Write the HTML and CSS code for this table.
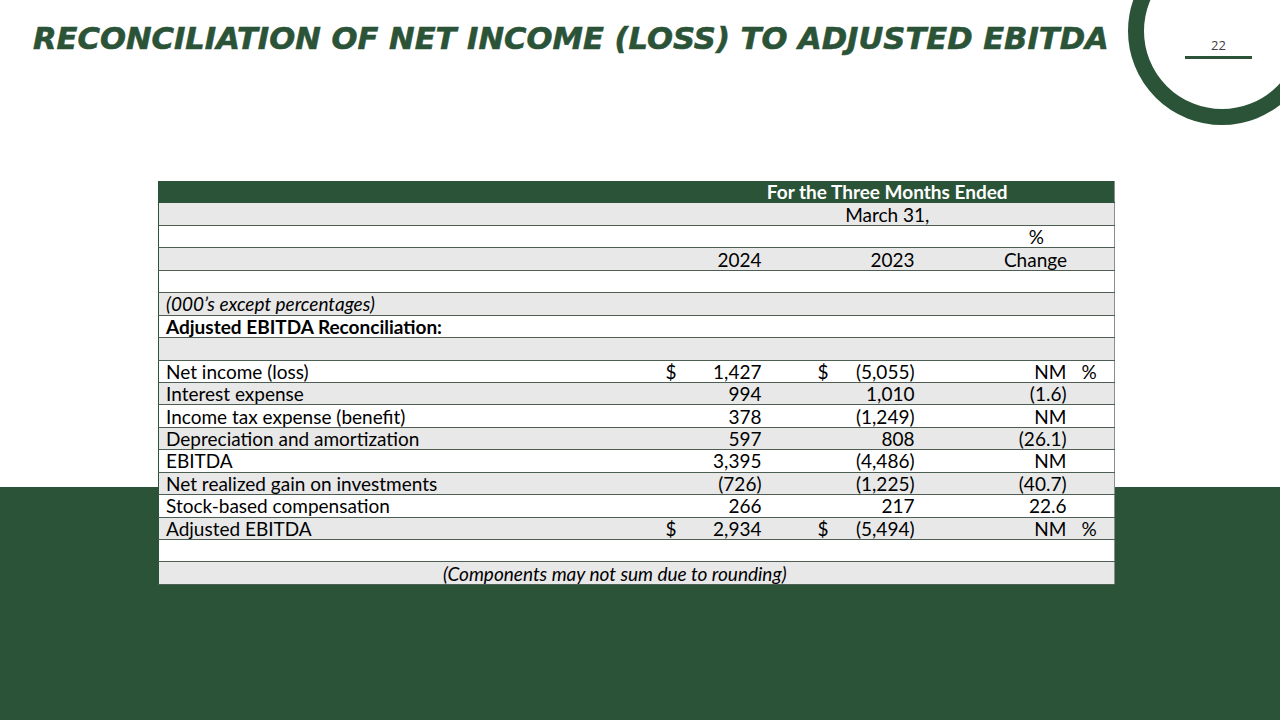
FILE: index.html
```html
<!DOCTYPE html>
<html>
<head>
<meta charset="utf-8">
<link rel="stylesheet" href="styles.css">
</head>
<body>
<div class="slide">
  <div class="ring"></div>
  <div class="pagenum">22</div>
  <header class="head">
    <h1 class="title">RECONCILIATION OF NET INCOME (LOSS) TO ADJUSTED EBITDA</h1>
  </header>
  <main class="content">
    <table class="recon">
      <colgroup>
        <col class="c-label"><col class="c-d1"><col class="c-v1"><col class="c-d2"><col class="c-v2"><col class="c-ch"><col class="c-pct">
      </colgroup>
      <tr class="hdr"><td></td><td colspan="6" class="ctr bold">For the Three Months Ended</td></tr>
      <tr class="g"><td></td><td colspan="6" class="ctr">March 31,</td></tr>
      <tr class="w"><td></td><td></td><td></td><td></td><td></td><td colspan="2" class="pcthead">%</td></tr>
      <tr class="g"><td></td><td></td><td class="num">2024</td><td></td><td class="num">2023</td><td colspan="2" class="chhead">Change</td></tr>
      <tr class="w"><td colspan="7"></td></tr>
      <tr class="g"><td colspan="7" class="lbl it">(000’s except percentages)</td></tr>
      <tr class="w"><td colspan="7" class="lbl bold">Adjusted EBITDA Reconciliation:</td></tr>
      <tr class="g"><td colspan="7"></td></tr>
      <tr class="w"><td class="lbl">Net income (loss)</td><td class="dol">$</td><td class="num">1,427</td><td class="dol2">$</td><td class="num">(5,055)</td><td class="num">NM</td><td class="pc">%</td></tr>
      <tr class="g"><td class="lbl">Interest expense</td><td></td><td class="num">994</td><td></td><td class="num">1,010</td><td class="num">(1.6)</td><td></td></tr>
      <tr class="w"><td class="lbl">Income tax expense (benefit)</td><td></td><td class="num">378</td><td></td><td class="num">(1,249)</td><td class="num">NM</td><td></td></tr>
      <tr class="g"><td class="lbl">Depreciation and amortization</td><td></td><td class="num">597</td><td></td><td class="num">808</td><td class="num">(26.1)</td><td></td></tr>
      <tr class="w"><td class="lbl">EBITDA</td><td></td><td class="num">3,395</td><td></td><td class="num">(4,486)</td><td class="num">NM</td><td></td></tr>
      <tr class="g"><td class="lbl">Net realized gain on investments</td><td></td><td class="num">(726)</td><td></td><td class="num">(1,225)</td><td class="num">(40.7)</td><td></td></tr>
      <tr class="w"><td class="lbl">Stock-based compensation</td><td></td><td class="num">266</td><td></td><td class="num">217</td><td class="num">22.6</td><td></td></tr>
      <tr class="g"><td class="lbl">Adjusted EBITDA</td><td class="dol">$</td><td class="num">2,934</td><td class="dol2">$</td><td class="num">(5,494)</td><td class="num">NM</td><td class="pc">%</td></tr>
      <tr class="w"><td colspan="7"></td></tr>
      <tr class="g"><td colspan="6" class="ctr it">(Components may not sum due to rounding)</td><td></td></tr>
    </table>
  </main>
</div>
</body>
</html>
```
FILE: styles.css
```css
html, body { margin: 0; padding: 0; }
body { width: 1280px; height: 720px; overflow: hidden; }
.slide {
  position: relative;
  width: 1280px;
  height: 720px;
  overflow: hidden;
  background: linear-gradient(to bottom, #ffffff 0, #ffffff 487px, #2b5337 487px, #2b5337 100%);
  font-family: "Lato", "Liberation Sans", sans-serif;
}
.ring {
  position: absolute;
  left: 1128px;
  top: -63px;
  width: 188px;
  height: 188px;
  box-sizing: border-box;
  border: 16px solid #2b5337;
  border-radius: 50%;
}
.pagenum {
  position: absolute;
  left: 1185px;
  top: 36px;
  width: 67px;
  text-align: center;
  font-family: "Open Sans", sans-serif;
  font-size: 13px;
  line-height: 18px;
  color: #404040;
  border-bottom: 3px solid #2b5337;
  padding-bottom: 2px;
}
.head { padding: 17px 0 0 33px; height: 44px; }
.title {
  margin: 0;
  font-family: "DejaVu Sans", sans-serif;
  font-style: italic;
  font-weight: 700;
  font-size: 30.6px;
  line-height: 44px;
  color: #2b5337;
  letter-spacing: 0px;
  white-space: nowrap;
  -webkit-text-stroke: 0.6px #2b5337;
}
.content { padding: 120px 0 0 158px; }
.recon {
  border-collapse: collapse;
  table-layout: fixed;
  width: 956px;
  font-size: 19px;
  color: #000;
  border-left: 1px solid #2b5337;
  border-right: 1px solid #8a8f8b;
}
.c-label { width: 502px; }
.c-d1 { width: 20px; }
.c-v1 { width: 85px; }
.c-d2 { width: 67px; }
.c-v2 { width: 86px; }
.c-ch { width: 152px; }
.c-pct { width: 44px; }
.recon td {
  height: 21.45px;
  padding: 0;
  line-height: 21px;
  border-bottom: 1px solid #4d5f52;
  white-space: nowrap;
  overflow: visible;
}
.recon tr.hdr td { background: #2b5337; color: #fff; border-bottom: 1px solid #2b5337; }
.recon tr.g td { background: #e8e8e8; }
.recon tr.w td { background: #ffffff; }
.ctr { text-align: center; }
.bold { font-weight: 700; }
.it { font-style: italic; }
.recon td.lbl { padding-left: 7px; }
.recon td.num { text-align: right; padding-right: 4px; }
.recon td.dol { text-align: left; padding-left: 5px; }
.recon td.dol2 { text-align: left; padding-left: 52px; }
.recon td.pc { padding-left: 11px; }
.recon td.pcthead { text-align: right; padding-right: 70px; }
.recon td.chhead { text-align: right; padding-right: 47px; }
```
